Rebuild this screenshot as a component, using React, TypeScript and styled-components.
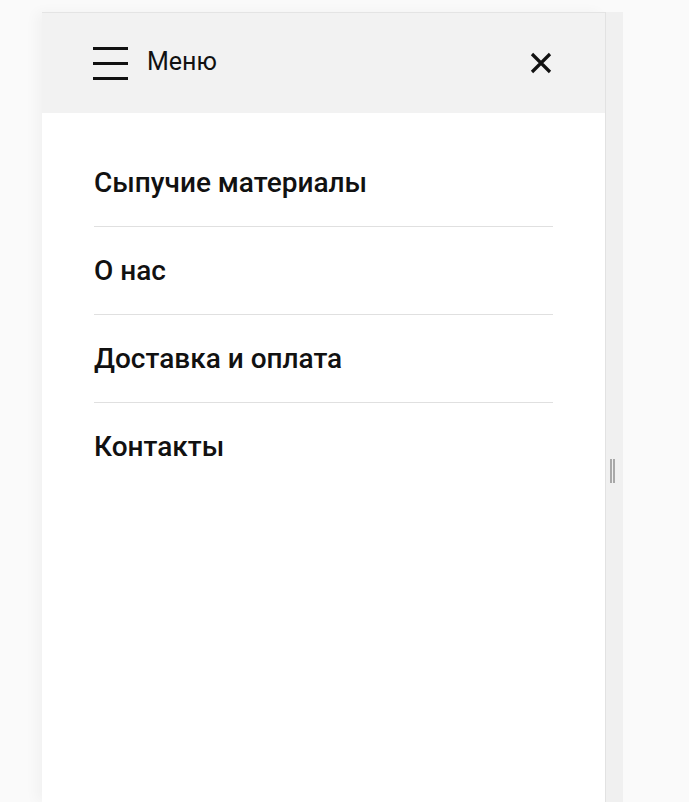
import React from "react";
import styled, { createGlobalStyle } from "styled-components";

const Global = createGlobalStyle`
  html, body { margin: 0; padding: 0; background: #fafafa; }
  body { font-family: Roboto, "Noto Sans", Arial, sans-serif; color: #111; }
`;

const Page = styled.div`
  display: flex;
  align-items: stretch;
  padding: 12px 0 0 42px;
  min-height: 790px;
`;

const Panel = styled.aside`
  width: 563px;
  background: #fff;
  border-top: 1px solid #e4e4e4;
  box-shadow: -6px 0 12px rgba(0, 0, 0, 0.035);
  display: flex;
  flex-direction: column;
`;

const Gutter = styled.div`
  width: 17px;
  background: #f0f0f0;
  border-left: 1px solid #e2e2e2;
  display: flex;
  align-items: center;
  justify-content: center;
`;

const Handle = styled.div`
  width: 5px;
  height: 24px;
  margin-left: -4px;
  margin-top: 128px;
  border-left: 2px solid #a8a8a8;
  border-right: 2px solid #a8a8a8;
  box-sizing: border-box;
`;

const Header = styled.header`
  height: 100px;
  background: #f2f2f2;
  display: flex;
  align-items: center;
  padding: 0 52px 0 51px;
`;

const Burger = styled.button`
  width: 35px;
  height: 33px;
  padding: 0;
  border: none;
  background: transparent;
  display: flex;
  flex-direction: column;
  justify-content: space-between;
  span {
    display: block;
    height: 3px;
    background: #111;
  }
`;

const Title = styled.span`
  margin-left: 19px;
  font-size: 25px;
  font-weight: 400;
  color: #111;
  flex: 1;
  margin-top: -4px;
`;

const Close = styled.button`
  width: 24px;
  height: 24px;
  padding: 0;
  border: none;
  background: transparent;
  display: flex;
  align-items: center;
  justify-content: center;
`;

const Nav = styled.nav`
  padding: 26px 52px 0 52px;
  display: flex;
  flex-direction: column;
`;

const Item = styled.a<{ $last?: boolean }>`
  height: 88px;
  display: flex;
  align-items: center;
  font-size: 28px;
  font-weight: 500;
  color: #111;
  text-decoration: none;
  padding-bottom: 1px;
  box-sizing: border-box;
  border-bottom: 1px solid ${(p) => (p.$last ? "transparent" : "#e0e0e0")};
`;

const items = ["Сыпучие материалы", "О нас", "Доставка и оплата", "Контакты"];

export default function App() {
  return (
    <>
      <Global />
      <Page>
        <Panel>
          <Header>
            <Burger aria-label="menu">
              <span />
              <span />
              <span />
            </Burger>
            <Title>Меню</Title>
            <Close aria-label="close">
              <svg width="22" height="22" viewBox="0 0 22 22">
                <path d="M2 2 L20 20 M20 2 L2 20" stroke="#111" strokeWidth="3.2" />
              </svg>
            </Close>
          </Header>
          <Nav>
            {items.map((t, i) => (
              <Item key={t} href="#" $last={i === items.length - 1}>
                {t}
              </Item>
            ))}
          </Nav>
        </Panel>
        <Gutter>
          <Handle />
        </Gutter>
      </Page>
    </>
  );
}
